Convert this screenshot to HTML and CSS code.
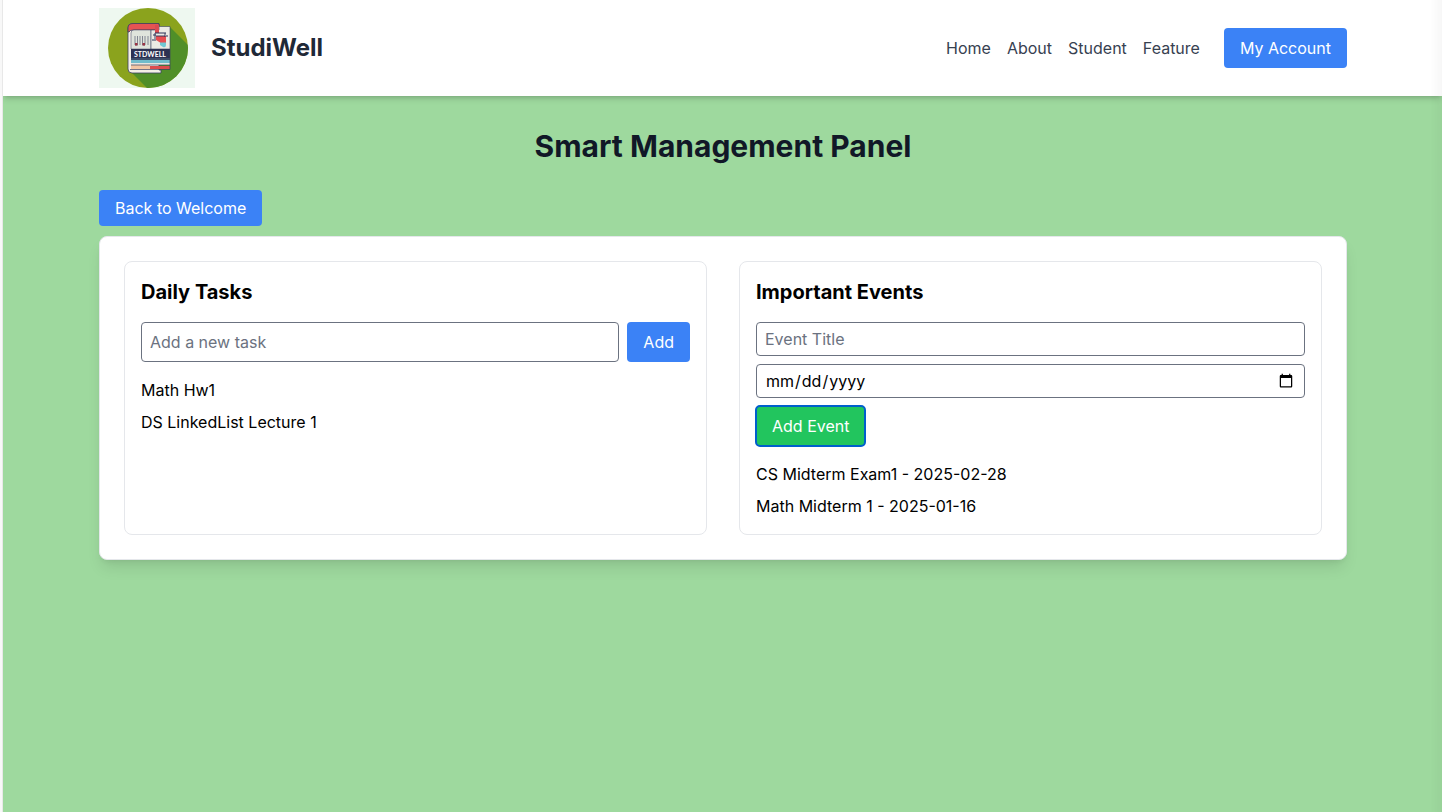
FILE: index.html
```html
<!DOCTYPE html>
<html lang="en">
<head>
  <meta charset="UTF-8" />
  <meta name="viewport" content="width=device-width, initial-scale=1.0" />
  <title>StudiWell</title>
  <link rel="stylesheet" href="styles.css">
</head>
<body>
  <header class="header">
    <div class="brand">
      <svg class="logo" viewBox="0 0 96 80" role="img" aria-label="StudiWell logo">
        <defs>
          <clipPath id="disc"><circle cx="49" cy="40" r="40" /></clipPath>
        </defs>
        <rect width="96" height="80" fill="#eef8f0" />
        <circle cx="49" cy="40" r="40" fill="#8ba31d" />
        <path d="M29 61 L71 19 L96 44 V80 H48 Z" fill="#508f28" clip-path="url(#disc)" />
        <!-- book cover and spine -->
        <path d="M32 16 H60 V62 H62 V65 H33 Q29 65 29 61 V20 Q29 16 32 16 Z" fill="#f3efe6" stroke="#3b3f60" stroke-width="0.8" />
        <path d="M29 24 V20 Q29 15.500 34 15.500 H60 V22 H34 Q31 22 30 24 Z" fill="#e55353" stroke="#3b3f60" stroke-width="0.8" />
        <path d="M32 41 V25 Q32 22 35 22 H52 V41 Z" fill="#dfe4dc" stroke="#3b3f60" stroke-width="0.5" />
        <path d="M60 18.500 H71 V41 H52 V22 H60 Z" fill="#ebeae4" stroke="#3b3f60" stroke-width="0.6" />
        <path d="M56 17 H60 V25 H56 Z" fill="#d94b52" />
        <path d="M36 28 V37 H38.500 V28 M41 28 V37 M43.500 28 V37 H46 V28 M49 28 V37" fill="none" stroke="#6a6e80" stroke-width="0.8" />
        <path d="M36 35 h2.500 v2.500 h-2.500 z M43.500 35 h2.500 v2.500 h-2.500 z" fill="#9b3444" />
        <path d="M61 34 H67 V37 Q67 40 64 39 L61 37 Z" fill="#70c8d4" />
        <path d="M57 28 H67 V34.500 H61 L57 32 Z" fill="#e84d51" />
        <path d="M56 25 H67 M54 27 H57 M53 32 H57 M67 28 H69" stroke="#2d3158" stroke-width="1.2" />
        <path d="M56 25 V31 M66 25 V29 M57 28 H66" fill="none" stroke="#2d3158" stroke-width="0.9" />
        <!-- title band and stripes -->
        <rect x="32" y="41" width="39" height="9" fill="#2d3153" />
        <text class="logo-text" x="51" y="49" text-anchor="middle">STDWELL</text>
        <rect x="32" y="50" width="39" height="2" fill="#3c4c68" />
        <rect x="32" y="52" width="39" height="3" fill="#70bccb" />
        <rect x="32" y="55" width="39" height="2" fill="#e8e5de" />
        <rect x="32" y="57" width="19" height="4" fill="#f2c6a4" />
        <rect x="51" y="58" width="20" height="3" fill="#dc4c4d" />
        <path d="M32 57 H71 M31 61.500 H71 V41" fill="none" stroke="#3b3f60" stroke-width="0.7" />
      </svg>
      <span class="brand-name">StudiWell</span>
    </div>
    <nav class="nav">
      <ul class="nav-links">
        <li><a href="#">Home</a></li>
        <li><a href="#">About</a></li>
        <li><a href="#">Student</a></li>
        <li><a href="#">Feature</a></li>
      </ul>
      <button type="button" class="btn">My Account</button>
    </nav>
  </header>

  <main class="main">
    <h1>Smart Management Panel</h1>
    <div class="back">
      <a href="#" class="back-link">Back to Welcome</a>
    </div>

    <div class="panel">
      <section class="box">
        <h2>Daily Tasks</h2>
        <form class="task-form">
          <input type="text" id="task" class="field" placeholder="Add a new task" aria-label="Add a new task" />
          <button type="submit" class="btn">Add</button>
        </form>
        <ul class="list">
          <li>Math Hw1</li>
          <li>DS LinkedList Lecture 1</li>
        </ul>
      </section>

      <section class="box">
        <h2>Important Events</h2>
        <form class="event-form">
          <input type="text" id="eventTitle" class="field" placeholder="Event Title" aria-label="Event Title" />
          <input type="date" id="eventDate" class="field" aria-label="Event Date" />
          <button type="submit" class="btn btn-green">Add Event</button>
        </form>
        <ul class="list">
          <li>CS Midterm Exam1 - 2025-02-28</li>
          <li>Math Midterm 1 - 2025-01-16</li>
        </ul>
      </section>
    </div>
  </main>
</body>
</html>
```

FILE: styles.css
```css
* {
  box-sizing: border-box;
  margin: 0;
  padding: 0;
}
html {
  background-color: #f8f8f8;
}
body {
  min-height: 100vh;
  margin-left: 2px;
  border-left: 1px solid #e8e8e8;
  background-color: #9ed99e;
  color: #000;
  font-family: Inter, sans-serif;
  font-size: 16px;
  line-height: 24px;
}
/* soft shade along the right edge of the window */
body::after {
  content: "";
  position: fixed;
  top: 0;
  right: 0;
  bottom: 0;
  width: 12px;
  background: linear-gradient(to right, rgba(0,0,0,0), rgba(0,0,0,0.03));
  pointer-events: none;
}
ul {
  list-style: none;
}
a {
  color: inherit;
  text-decoration: none;
}
button,
input {
  font: inherit;
}
.header {
  display: flex;
  justify-content: space-between;
  align-items: center;
  padding: 8px 95px 8px 96px;
  background-color: #fff;
  box-shadow: 0 4px 6px -1px rgba(0,0,0,0.14), 0 2px 4px -2px rgba(0,0,0,0.14);
}
.brand {
  display: flex;
  align-items: center;
  gap: 16px;
}
.logo {
  display: block;
  width: 96px;
  height: 80px;
}
.logo-text {
  fill: #fff;
  font-family: "Liberation Sans Narrow", Lato, sans-serif;
  font-size: 7px;
  font-weight: bold;
}
.brand-name {
  color: #1f2937;
  font-size: 24px;
  line-height: 32px;
  font-weight: bold;
}
.nav {
  display: flex;
  align-items: center;
  gap: 24px;
}
.nav-links {
  display: flex;
  gap: 16px;
  color: #374151;
}
.btn {
  padding: 8px 16px;
  border: none;
  border-radius: 4px;
  background-color: #3b82f6;
  color: #fff;
  cursor: pointer;
}
.btn:hover {
  background-color: #2563eb;
}
.btn-green {
  background-color: #22c55e;
  outline: 2px solid #005fcc;
  outline-offset: -1px;
}
.btn-green:hover {
  background-color: #16a34a;
}
.main {
  padding: 32px 95px 32px 96px;
}
h1 {
  margin-bottom: 32px;
  color: #111827;
  font-size: 30px;
  line-height: 36px;
  text-align: center;
}
.back {
  margin-bottom: 16px;
}
.back-link {
  padding: 8px 16px;
  border-radius: 4px;
  background-color: #3b82f6;
  color: #fff;
}
.panel {
  display: grid;
  grid-template-columns: 1fr 1fr;
  gap: 32px;
  padding: 24px;
  border: 1px solid #e5e7eb;
  border-radius: 8px;
  background-color: #fff;
  box-shadow: 0 10px 15px -3px rgba(0,0,0,0.1), 0 4px 6px -4px rgba(0,0,0,0.1);
}
.box {
  padding: 16px;
  border: 1px solid #e5e7eb;
  border-radius: 8px;
}
h2 {
  margin-bottom: 16px;
  font-size: 20px;
  line-height: 28px;
}
.field {
  width: 100%;
  padding: 4px 8px;
  border: 1px solid #6b7280;
  border-radius: 4px;
  background-color: #fff;
  color: #000;
}
.field::placeholder {
  color: #6b7280;
}
.field::-webkit-datetime-edit {
  padding: 0;
}
.task-form {
  display: flex;
  gap: 8px;
}
.event-form {
  display: flex;
  flex-direction: column;
  align-items: flex-start;
  gap: 8px;
}
.event-form .field {
  height: 34px;
}
.list {
  display: flex;
  flex-direction: column;
  gap: 8px;
  margin-top: 16px;
}
```
